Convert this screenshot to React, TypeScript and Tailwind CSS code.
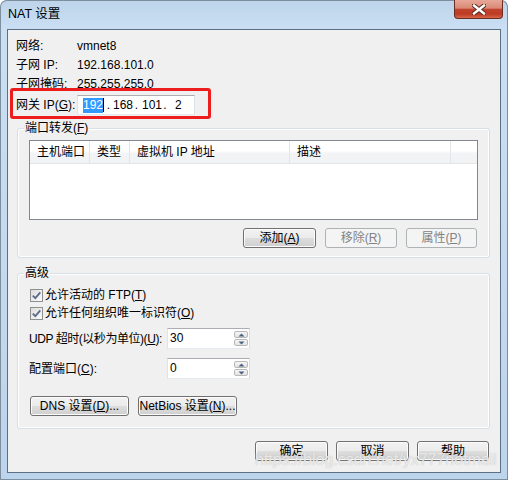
import type { ReactNode } from "react";

const btnBase =
  "flex h-[20px] items-center justify-center rounded-[3px] border text-[12px] leading-none whitespace-nowrap";
const btnOn =
  "border-[#707070] text-black bg-[linear-gradient(#f2f2f2_0%,#ebebeb_48%,#dddddd_52%,#cfcfcf_100%)] shadow-[inset_0_0_0_1px_#fcfcfc]";
const btnOff = "border-[#adb2b5] text-[#838383] bg-[#f4f4f4]";

function Btn({
  children,
  w,
  disabled,
  primary,
}: {
  children: ReactNode;
  w: string;
  disabled?: boolean;
  primary?: boolean;
}) {
  return (
    <div
      className={`${btnBase} ${w} ${disabled ? btnOff : btnOn} ${
        primary ? "border-[#3c7fb1] shadow-[inset_0_0_0_1px_#9fdcf5]" : ""
      }`}
    >
      {children}
    </div>
  );
}

function Check({ children }: { children: ReactNode }) {
  return (
    <div className="ml-[12px] flex h-[18px] items-center gap-[2px]">
      <div className="flex h-[13px] w-[13px] items-center justify-center border border-[#8e8f8f] bg-[linear-gradient(135deg,#dcdcdc,#fbfbfb)]">
        <svg width="11" height="11" viewBox="0 0 11 11">
          <path d="M1.8 5.6 L4.3 8.2 L9.3 2.4" fill="none" stroke="#5a6b8c" strokeWidth="1.8" />
        </svg>
      </div>
      <span>{children}</span>
    </div>
  );
}

function Arrow({ up }: { up?: boolean }) {
  return (
    <div className="flex h-[7px] w-[14px] items-center justify-center rounded-[2px] border border-[#b9b9b9] bg-[linear-gradient(#f6f6f6,#e2e2e2)]">
      <svg width="7" height="4" viewBox="0 0 7 4">
        <path d={up ? "M0.5 3.5 L3.5 0.5 L6.5 3.5 Z" : "M0.5 0.5 L3.5 3.5 L6.5 0.5 Z"} fill="#4d6185" />
      </svg>
    </div>
  );
}

function Spin({ value }: { value: string }) {
  return (
    <div className="flex h-[21px] w-[83px] shrink-0 border border-[#abadb3] border-b-[#e3e9ef] border-l-[#e2e3ea] border-r-[#dbdfe6] bg-white">
      <span className="flex-1 pl-[2px] pt-[2px] leading-[14px]">{value}</span>
      <div className="flex flex-col gap-[1px] pr-[1px] pt-[2px]">
        <Arrow up />
        <Arrow />
      </div>
    </div>
  );
}

function Group({ label, h, mt, children }: { label: ReactNode; h: string; mt: string; children: ReactNode }) {
  return (
    <div className={`${mt} ${h} ml-[9px] mr-[10px] rounded-[3px] border border-[#d5dfe5] shadow-[inset_0_0_0_1px_#ffffff]`}>
      <span className="-mt-[8px] ml-[6px] block w-fit bg-[#f0f0f0] px-[1px] leading-[15px]">{label}</span>
      {children}
    </div>
  );
}

const cols = [
  { t: "主机端口", w: "w-[60px]" },
  { t: "类型", w: "w-[40px]" },
  { t: "虚拟机 IP 地址", w: "w-[160px]" },
  { t: "描述", w: "w-[161px]" },
];

export default function App() {
  return (
    <div className="relative h-[480px] w-[508px] overflow-hidden rounded-t-[7px] bg-[linear-gradient(180deg,#bed4ea_0%,#cadff3_6%,#c5dbf0_40%,#bcd4ec_100%)] font-['Liberation_Sans','Noto_Sans_CJK_SC',sans-serif] text-[12px] text-black shadow-[inset_0_0_0_1px_#7d8e9f]">
      {/* title bar */}
      <div className="flex h-[29px] items-center pl-[8px] text-[12.5px]">NAT 设置</div>
      <div className="absolute right-[5px] top-0 flex h-[19px] w-[49px] items-center justify-center rounded-b-[4px] border border-t-0 border-[#6b2e25] bg-[linear-gradient(#e8a898_0%,#d98a76_45%,#c2432d_52%,#bd3a24_78%,#d8674c_100%)]">
        <svg width="14" height="11" viewBox="0 0 14 11">
          <path d="M2 1.5 L12 9.5 M12 1.5 L2 9.5" stroke="#5a2a22" strokeWidth="4.4" strokeLinecap="square" />
          <path d="M2 1.5 L12 9.5 M12 1.5 L2 9.5" stroke="#ffffff" strokeWidth="2.4" strokeLinecap="square" />
        </svg>
      </div>

      {/* client area */}
      <div className="mx-[7px] h-[444px] border border-[#5d6f82] bg-[#f0f0f0]">
        <div className="pl-[8px] pt-[6px]">
          <div className="flex h-[19px] items-center">
            <span className="w-[61px]">网络:</span>
            <span>vmnet8</span>
          </div>
          <div className="flex h-[19px] items-center">
            <span className="w-[61px]">子网 IP:</span>
            <span>192.168.101.0</span>
          </div>
          <div className="flex h-[19px] items-center">
            <span className="w-[61px]">子网掩码:</span>
            <span>255.255.255.0</span>
          </div>
          <div className="mt-[2px] flex h-[20px] items-center">
            <span className="w-[61px] whitespace-nowrap">
              网关 IP(<u>G</u>):
            </span>
            <div className="flex h-[20px] w-[118px] items-center border border-[#abadb3] border-b-[#e3e9ef] border-l-[#e2e3ea] border-r-[#dbdfe6] bg-white pl-[5px]">
              <span className="w-[20px] bg-[#3399ff] text-center leading-[15px] text-white">192</span>
              <span className="h-[14px] w-[1px] bg-black" />
              <span className="w-[9px] text-center">.</span>
              <span className="w-[18px]">168</span>
              <span className="w-[11px] text-center">.</span>
              <span className="w-[18px]">101</span>
              <span className="w-[10px] text-center">.</span>
              <span className="pl-[5px]">2</span>
            </div>
          </div>
        </div>

        <Group
          label={
            <>
              端口转发(<u>F</u>)
            </>
          }
          h="h-[130px]"
          mt="mt-[13px]"
        >
          <div className="mx-[11px] mt-[4px] h-[80px] border border-[#828790] bg-white">
            <div className="flex h-[23px] border-b border-[#e5e5e5] bg-[linear-gradient(#ffffff_0%,#ffffff_45%,#f3f4f6_55%,#f1f2f4_100%)]">
              {cols.map((c) => (
                <div key={c.t} className={`${c.w} flex items-center border-r border-[#e3e5e8] pl-[7px]`}>
                  {c.t}
                </div>
              ))}
            </div>
          </div>
          <div className="mr-[12px] mt-[8px] flex justify-end gap-[9px]">
            <Btn w="w-[73px]">
              添加(<u>A</u>)
            </Btn>
            <Btn w="w-[72px]" disabled>
              移除(<u>R</u>)
            </Btn>
            <Btn w="w-[71px]" disabled>
              属性(<u>P</u>)
            </Btn>
          </div>
        </Group>

        <Group label="高级" h="h-[156px]" mt="mt-[15px]">
          <div className="mt-[5px]">
            <Check>
              允许活动的 FTP(<u>T</u>)
            </Check>
            <Check>
              允许任何组织唯一标识符(<u>O</u>)
            </Check>
          </div>
          <div className="ml-[11px] mt-[6px] flex items-center">
            <span className="w-[138px] whitespace-nowrap tracking-[-0.45px]">
              UDP 超时(以秒为单位)(<u>U</u>):
            </span>
            <Spin value="30" />
          </div>
          <div className="ml-[11px] mt-[9px] flex items-center">
            <span className="w-[138px] whitespace-nowrap">
              配置端口(<u>C</u>):
            </span>
            <Spin value="0" />
          </div>
          <div className="ml-[12px] mt-[17px] flex gap-[9px]">
            <Btn w="w-[99px]">
              DNS 设置(<u>D</u>)...
            </Btn>
            <Btn w="w-[99px]">
              NetBios 设置(<u>N</u>)...
            </Btn>
          </div>
        </Group>

        <div className="mr-[11px] mt-[12px] flex justify-end gap-[8px]">
          <Btn w="w-[73px]" primary>
            确定
          </Btn>
          <Btn w="w-[73px]">取消</Btn>
          <Btn w="w-[72px]">帮助</Btn>
        </div>
      </div>

      {/* annotation + watermark overlays */}
      <div className="pointer-events-none absolute left-[10px] top-[88px] h-[31px] w-[201px] rounded-[3px] border-[3px] border-[#ee1d1d]" />
      <div className="pointer-events-none absolute left-[255px] top-[449px] text-[16px] leading-[22px] text-white/70 [text-shadow:0_0_1px_#b0b0b0]">
        https://blog.csdn.net/yx777hotmail
      </div>
    </div>
  );
}
